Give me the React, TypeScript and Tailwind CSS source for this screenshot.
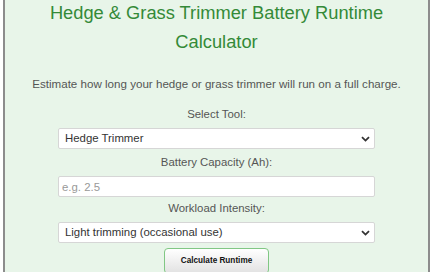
import React from "react";

const Chevron = () => (
  <svg
    aria-hidden
    width="9"
    height="6"
    viewBox="0 0 9 6"
    className="pointer-events-none absolute right-[5px] top-1/2 -translate-y-1/2"
  >
    <path d="M1 1.2 L4.5 4.6 L8 1.2" fill="none" stroke="#333" strokeWidth="1.8" />
  </svg>
);

function SelectField({ value, options }: { value: string; options: string[] }) {
  return (
    <div className="relative mx-auto w-[317px]">
      <select
        defaultValue={value}
        className="block h-[21px] w-full appearance-none rounded-[2px] border border-[#d6d6d6] bg-white pl-[6px] text-[11.4px] leading-[19px] text-[#333] outline-none"
      >
        {options.map((o) => (
          <option key={o}>{o}</option>
        ))}
      </select>
      <Chevron />
    </div>
  );
}

export default function App() {
  return (
    <div className="min-h-screen bg-white font-['Liberation_Sans',Arial,sans-serif]">
      <div className="ml-[3px] h-[272px] w-[427px] overflow-hidden border-x-2 border-[#8c8c8c] bg-[#e8f5e9] text-center">
        <h1 className="-mt-[2px] px-4 text-[18.3px] leading-[29px] font-normal text-[#348a38]">
          Hedge &amp; Grass Trimmer Battery Runtime Calculator
        </h1>

        <p className="mt-[20px] text-[11.6px] leading-[16px] text-[#555]">
          Estimate how long your hedge or grass trimmer will run on a full charge.
        </p>

        <form className="mt-[14px]" onSubmit={(e) => e.preventDefault()}>
          <label className="mb-[6px] block text-[11.4px] leading-[16px] text-[#555]">Select Tool:</label>
          <SelectField value="Hedge Trimmer" options={["Hedge Trimmer", "Grass Trimmer"]} />

          <label className="mt-[5px] mb-[6px] block text-[11.4px] leading-[16px] text-[#555]">
            Battery Capacity (Ah):
          </label>
          <input
            type="text"
            placeholder="e.g. 2.5"
            className="mx-auto block h-[21px] w-[317px] rounded-[2px] border border-[#d6d6d6] bg-white pl-[3px] text-[11.4px] text-[#333] outline-none placeholder:text-[#999]"
          />

          <label className="mt-[3px] mb-[6px] block text-[11.4px] leading-[16px] text-[#555]">
            Workload Intensity:
          </label>
          <SelectField
            value="Light trimming (occasional use)"
            options={["Light trimming (occasional use)", "Moderate trimming", "Heavy trimming"]}
          />

          <button
            type="submit"
            className="mx-auto mt-[5px] block h-[26px] w-[105px] rounded-[4px] border border-[#81c784] bg-gradient-to-b from-white to-[#e2e2e2] text-[8.2px] font-bold text-[#111]"
          >
            Calculate Runtime
          </button>
        </form>
      </div>
    </div>
  );
}
